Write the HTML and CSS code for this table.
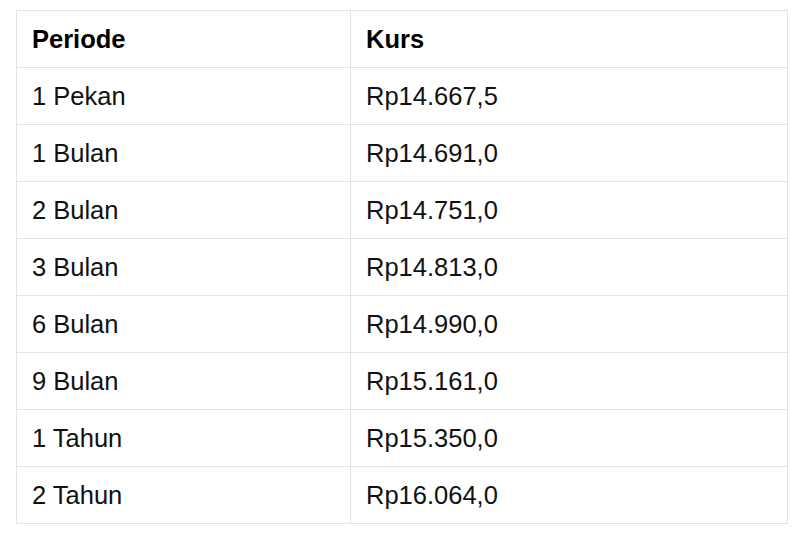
FILE: index.html
```html
<!DOCTYPE html>
<html>
<head>
<meta charset="utf-8">
<link rel="stylesheet" href="styles.css">
</head>
<body>
<table class="rates">
  <thead>
    <tr><th class="col-period">Periode</th><th>Kurs</th></tr>
  </thead>
  <tbody>
    <tr><td>1 Pekan</td><td>Rp14.667,5</td></tr>
    <tr><td>1 Bulan</td><td>Rp14.691,0</td></tr>
    <tr><td>2 Bulan</td><td>Rp14.751,0</td></tr>
    <tr><td>3 Bulan</td><td>Rp14.813,0</td></tr>
    <tr><td>6 Bulan</td><td>Rp14.990,0</td></tr>
    <tr><td>9 Bulan</td><td>Rp15.161,0</td></tr>
    <tr><td>1 Tahun</td><td>Rp15.350,0</td></tr>
    <tr><td>2 Tahun</td><td>Rp16.064,0</td></tr>
  </tbody>
</table>
</body>
</html>
```
FILE: styles.css
```css
html, body {
  margin: 0;
  padding: 0;
  background: #ffffff;
}
body {
  padding: 10px 0 0 16px;
  font-family: "Liberation Sans", Arial, sans-serif;
  color: #111111;
}
.rates {
  border-collapse: collapse;
  width: 772px;
  table-layout: fixed;
}
.rates th,
.rates td {
  border: 1px solid #e3e3e3;
  padding: 14px 15px;
  font-size: 25.5px;
  line-height: 28px;
  text-align: left;
  vertical-align: middle;
}
.rates th {
  font-weight: bold;
  color: #000000;
}
.col-period {
  width: 303px;
}
```
